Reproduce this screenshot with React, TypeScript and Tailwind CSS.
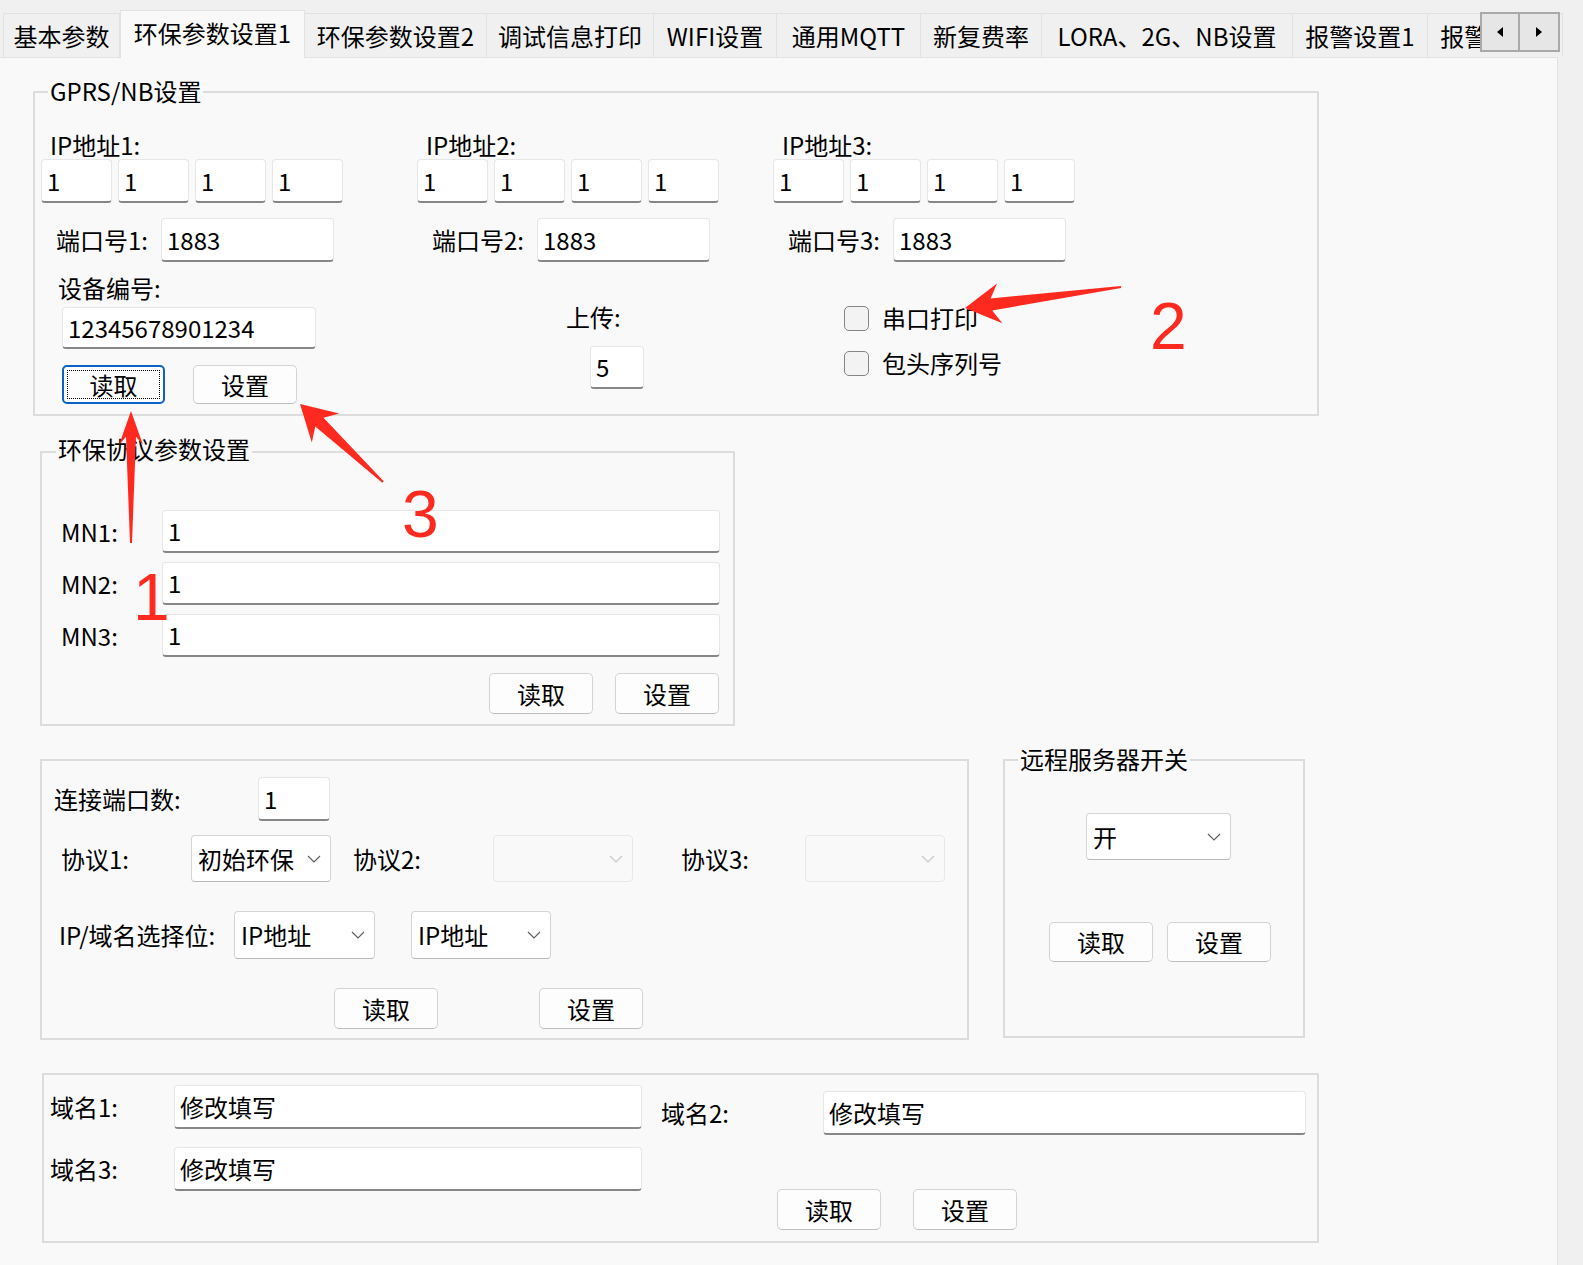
import React from 'react';

type Pt = [number, number];

// polygon for a tapered annotation arrow (tail -> tip)
const arrowPoints = (tail: Pt, tip: Pt, headLen: number, headHalf: number, neckHalf: number, tailHalf: number) => {
  const dx = tip[0] - tail[0];
  const dy = tip[1] - tail[1];
  const len = Math.hypot(dx, dy);
  const ux = dx / len;
  const uy = dy / len;
  const nx = -uy;
  const ny = ux;
  const base: Pt = [tip[0] - ux * headLen, tip[1] - uy * headLen];
  const neck: Pt = [tip[0] - ux * headLen * 0.76, tip[1] - uy * headLen * 0.76];
  const p = (q: Pt, s: number) => `${(q[0] + nx * s).toFixed(1)},${(q[1] + ny * s).toFixed(1)}`;
  return [p(tail, tailHalf), p(neck, neckHalf), p(base, headHalf), `${tip[0]},${tip[1]}`, p(base, -headHalf), p(neck, -neckHalf), p(tail, -tailHalf)].join(' ');
};

const Input: React.FC<{ value: string; className: string }> = ({ value, className }) => (
  <div className={`flex items-center shrink-0 pl-[5px] bg-white border border-[#e6e6e6] border-b-2 border-b-[#878787] rounded-[4px] text-[24px] leading-none ${className}`}>
    {value}
  </div>
);

const Button: React.FC<{ label: string; className: string; focused?: boolean }> = ({ label, className, focused }) => (
  <div
    className={`relative flex items-center justify-center shrink-0 bg-[#fdfdfd] rounded-[5px] text-[24px] leading-none ${
      focused ? 'border-2 border-[#0b63c5]' : 'border border-[#d3d3d3] border-b-[#bebebe]'
    } ${className}`}
  >
    {focused && <div className="absolute inset-[3px] border border-dotted border-black" />}
    {label}
  </div>
);

const Select: React.FC<{ value?: string; className: string; disabled?: boolean }> = ({ value, className, disabled }) => (
  <div
    className={`flex items-center justify-between shrink-0 pl-[6px] pr-[9px] rounded-[4px] border text-[24px] leading-none ${
      disabled ? 'bg-[#f9f9f9] border-[#e8e8e8]' : 'bg-white border-[#d4d4d4] border-b-[#b9b9b9]'
    } ${className}`}
  >
    <span>{value || ''}</span>
    <svg width="14" height="8" viewBox="0 0 14 8">
      <path d="M1 1 L7 7 L13 1" fill="none" stroke={disabled ? '#c8c8c8' : '#5f5f5f'} strokeWidth="1.2" />
    </svg>
  </div>
);

const Checkbox: React.FC<{ label: string; className?: string }> = ({ label, className }) => (
  <div className={`flex items-center ${className || ''}`}>
    <div className="w-[25px] h-[25px] rounded-[5px] border-[1.5px] border-[#858585] bg-[#f3f3f3]" />
    <span className="ml-[13px] text-[24px] leading-[26px]">{label}</span>
  </div>
);

const Group: React.FC<{ legend?: string; legendPos?: string; className: string; children: React.ReactNode }> = ({
  legend,
  legendPos,
  className,
  children,
}) => (
  <div className={`relative shrink-0 border-2 border-[#dcdcdc] ${className}`}>
    {legend && (
      <span className={`absolute px-[2px] bg-[#f9f9f9] text-[24px] leading-[28px] whitespace-nowrap ${legendPos || ''}`}>{legend}</span>
    )}
    {children}
  </div>
);

const tabs = [
  { label: '基本参数', w: 'w-[117px]' },
  { label: '环保参数设置1', w: 'w-[185px]', active: true },
  { label: '环保参数设置2', w: 'w-[182px]' },
  { label: '调试信息打印', w: 'w-[167px]' },
  { label: 'WIFI设置', w: 'w-[123px]' },
  { label: '通用MQTT', w: 'w-[144px]' },
  { label: '新复费率', w: 'w-[121px]' },
  { label: 'LORA、2G、NB设置', w: 'w-[251px]' },
  { label: '报警设置1', w: 'w-[135px]' },
  { label: '报警设置2', w: 'w-[135px]' },
];

const IpColumn: React.FC<{ n: number; port: string; children?: React.ReactNode; className: string }> = ({ n, port, children, className }) => (
  <div className={`flex flex-col shrink-0 ${className}`}>
    <div className="pl-[9px] text-[24px] leading-[26px]">IP地址{n}:</div>
    <div className="mt-px flex gap-[6px]">
      {[0, 1, 2, 3].map((i) => (
        <Input key={i} value="1" className="w-[71px] h-[44px]" />
      ))}
    </div>
    <div className="mt-[15px] flex items-center pl-[15px]">
      <span className="w-[105px] text-[24px] leading-[26px]">端口号{n}:</span>
      <Input value={port} className="w-[173px] h-[44px]" />
    </div>
    {children}
  </div>
);

export default function App() {
  return (
    <div className="relative w-[1583px] h-[1265px] overflow-hidden bg-[#f0f0f0] text-black font-['Noto_Sans_CJK_SC','Noto_Sans',sans-serif]">
      {/* tab strip */}
      <div className="relative h-[57px] flex items-end pl-[3px]">
        {tabs.map((t, i) => (
          <div
            key={t.label}
            className={`${t.w} shrink-0 flex items-center justify-center whitespace-nowrap text-[24px] leading-none border-t border-r border-[#e2e2e2] ${
              i === 0 ? 'border-l' : ''
            } ${t.active ? 'relative z-10 h-[48px] -mb-px bg-[#f9f9f9] border-l pb-[4px]' : 'h-[44px] bg-[#f0f0f0]'}`}
          >
            {t.label}
          </div>
        ))}
        <div className="absolute left-[1480px] top-[12px] flex">
          <div className="w-[40px] h-[40px] flex items-center justify-center bg-[#e6e6e6] border-2 border-[#a9a9a9]">
            <svg width="6" height="10" viewBox="0 0 6 10">
              <path d="M6 0 L0 5 L6 10 Z" fill="#000" />
            </svg>
          </div>
          <div className="w-[40px] h-[40px] flex items-center justify-center bg-[#e6e6e6] border-2 border-l-0 border-[#a9a9a9]">
            <svg width="6" height="10" viewBox="0 0 6 10">
              <path d="M0 0 L6 5 L0 10 Z" fill="#000" />
            </svg>
          </div>
        </div>
      </div>

      {/* tab page */}
      <div className="w-[1558px] h-[1208px] bg-[#f9f9f9] border-t border-r border-[#e2e2e2] flex flex-col">
        {/* GPRS/NB设置 */}
        <Group legend="GPRS/NB设置" legendPos="left-[13px] -top-[16px]" className="mt-[33px] ml-[33px] w-[1286px] h-[325px]">
          <div className="flex pt-[39px] pl-[6px]">
            <IpColumn n={1} port="1883" className="w-[376px]">
              <div className="mt-[13px] pl-[17px] text-[24px] leading-[26px]">设备编号:</div>
              <Input value="12345678901234" className="mt-[6px] ml-[21px] w-[254px] h-[42px]" />
              <div className="mt-[16px] ml-[21px] flex gap-[28px]">
                <Button label="读取" focused className="w-[103px] h-[39px]" />
                <Button label="设置" className="w-[104px] h-[39px]" />
              </div>
            </IpColumn>
            <IpColumn n={2} port="1883" className="w-[356px]">
              <div className="mt-[42px] ml-[149px] text-[24px] leading-[26px]">上传:</div>
              <Input value="5" className="mt-[16px] ml-[173px] w-[54px] h-[43px]" />
            </IpColumn>
            <IpColumn n={3} port="1883" className="w-[356px]">
              <Checkbox label="串口打印" className="mt-[43px] ml-[71px]" />
              <Checkbox label="包头序列号" className="mt-[19px] ml-[71px]" />
            </IpColumn>
          </div>
        </Group>

        {/* 环保协议参数设置 */}
        <Group legend="环保协议参数设置" legendPos="left-[14px] -top-[18px]" className="mt-[35px] ml-[40px] w-[695px] h-[275px]">
          <div className="flex flex-col pt-[57px] gap-[9px]">
            {['MN1', 'MN2', 'MN3'].map((m) => (
              <div key={m} className="flex items-center pl-[19px]">
                <span className="w-[101px] text-[24px] leading-[26px]">{m}:</span>
                <Input value="1" className="w-[558px] h-[43px]" />
              </div>
            ))}
          </div>
          <div className="mt-[16px] ml-[447px] flex gap-[22px]">
            <Button label="读取" className="w-[104px] h-[41px]" />
            <Button label="设置" className="w-[104px] h-[41px]" />
          </div>
        </Group>

        <div className="mt-[33px] flex items-start">
          {/* 端口/协议 */}
          <Group className="ml-[40px] w-[929px] h-[281px]">
            <div className="flex items-center pt-[16px] pl-[12px]">
              <span className="w-[204px] text-[24px] leading-[26px]">连接端口数:</span>
              <Input value="1" className="w-[72px] h-[44px]" />
            </div>
            <div className="mt-[14px] ml-[19px] flex items-center">
              <span className="w-[130px] text-[24px] leading-[26px]">协议1:</span>
              <Select value="初始环保" className="w-[140px] h-[47px]" />
              <span className="ml-[22px] w-[140px] text-[24px] leading-[26px]">协议2:</span>
              <Select disabled className="w-[140px] h-[47px]" />
              <span className="ml-[48px] w-[124px] text-[24px] leading-[26px]">协议3:</span>
              <Select disabled className="w-[140px] h-[47px]" />
            </div>
            <div className="mt-[29px] ml-[17px] flex items-center">
              <span className="w-[175px] text-[24px] leading-[26px]">IP/域名选择位:</span>
              <Select value="IP地址" className="w-[141px] h-[48px]" />
              <Select value="IP地址" className="ml-[36px] w-[140px] h-[48px]" />
            </div>
            <div className="mt-[29px] ml-[292px] flex gap-[101px]">
              <Button label="读取" className="w-[104px] h-[41px]" />
              <Button label="设置" className="w-[104px] h-[41px]" />
            </div>
          </Group>

          {/* 远程服务器开关 */}
          <Group legend="远程服务器开关" legendPos="left-[13px] -top-[16px]" className="ml-[34px] w-[302px] h-[279px]">
            <Select value="开" className="mt-[52px] ml-[81px] w-[145px] h-[47px]" />
            <div className="mt-[62px] ml-[44px] flex gap-[14px]">
              <Button label="读取" className="w-[104px] h-[40px]" />
              <Button label="设置" className="w-[104px] h-[40px]" />
            </div>
          </Group>
        </div>

        {/* 域名 */}
        <Group className="mt-[33px] ml-[42px] w-[1277px] h-[170px]">
          <div className="flex">
            <div className="flex flex-col pt-[10px] pl-[6px] gap-[18px]">
              {['域名1', '域名3'].map((d) => (
                <div key={d} className="flex items-center">
                  <span className="w-[124px] text-[24px] leading-[26px]">{d}:</span>
                  <Input value="修改填写" className="w-[468px] h-[44px]" />
                </div>
              ))}
            </div>
            <div className="flex flex-col pt-[16px] ml-[19px]">
              <div className="flex items-center">
                <span className="w-[162px] text-[24px] leading-[26px]">域名2:</span>
                <Input value="修改填写" className="w-[483px] h-[44px]" />
              </div>
              <div className="mt-[54px] ml-[116px] flex gap-[32px]">
                <Button label="读取" className="w-[104px] h-[41px]" />
                <Button label="设置" className="w-[104px] h-[41px]" />
              </div>
            </div>
          </div>
        </Group>
      </div>

      {/* red annotations */}
      <svg className="absolute inset-0 pointer-events-none" width="1583" height="1265">
        <polygon points={arrowPoints([131, 543], [131, 411], 34, 12, 5, 1)} fill="#ff2a1f" />
        <polygon points={arrowPoints([383, 482], [300, 404], 35, 20, 6, 1)} fill="#ff2a1f" />
        <polygon points={arrowPoints([1121, 287], [965, 308], 35, 20, 6, 1)} fill="#ff2a1f" />
      </svg>
      <span className="absolute left-[133px] top-[564px] text-[66px] leading-[66px] text-[#ff2a1f] font-['Liberation_Sans',sans-serif]">1</span>
      <span className="absolute left-[402px] top-[481px] text-[66px] leading-[66px] text-[#ff2a1f] font-['Liberation_Sans',sans-serif]">3</span>
      <span className="absolute left-[1150px] top-[293px] text-[66px] leading-[66px] text-[#ff2a1f] font-['Liberation_Sans',sans-serif]">2</span>
    </div>
  );
}
